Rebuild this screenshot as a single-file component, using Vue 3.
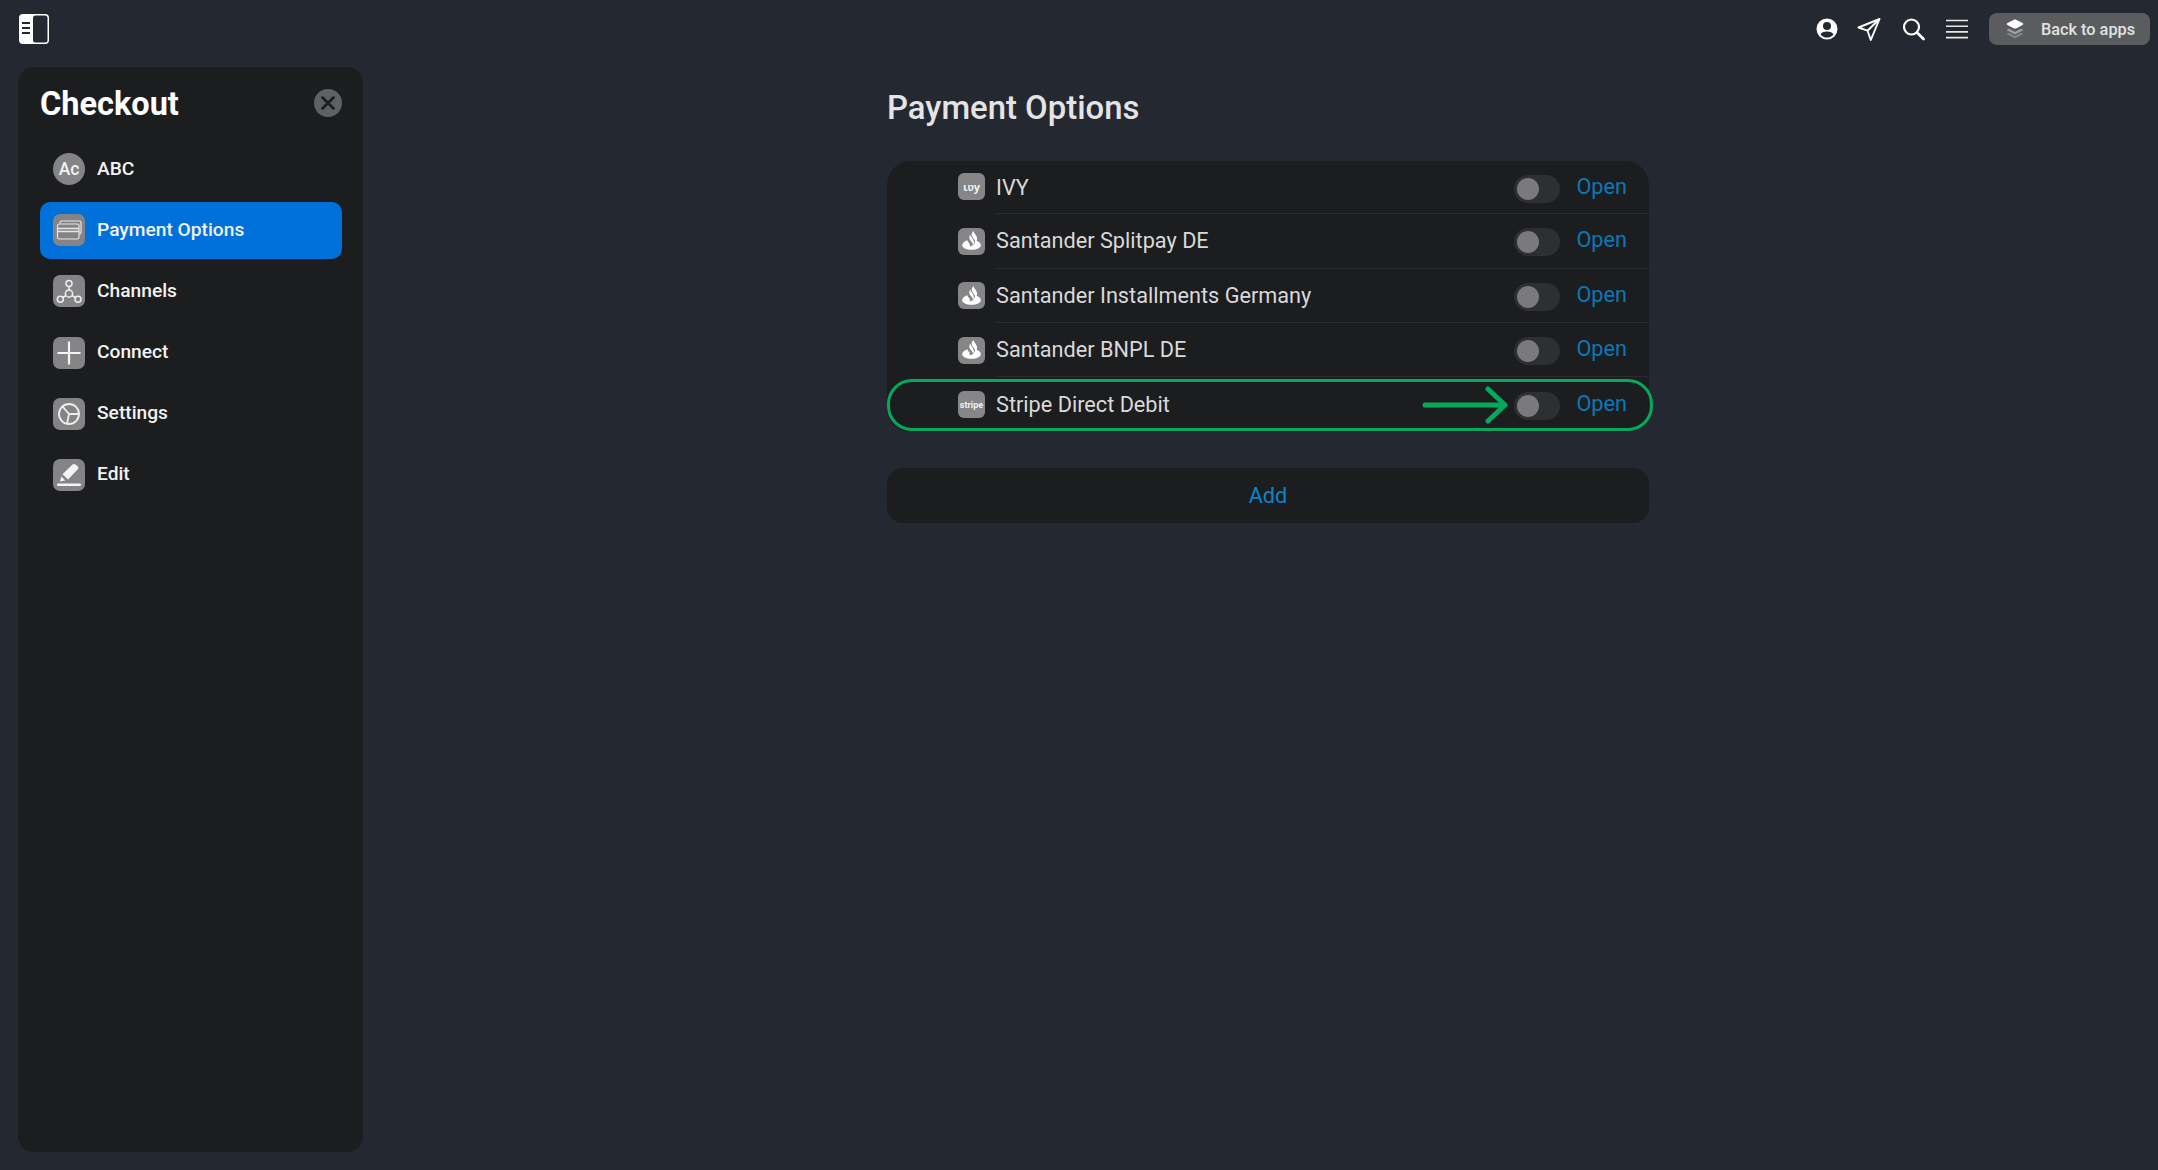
<template>
  <div class="page">
    <header class="topbar">
      <svg class="panel-toggle" viewBox="0 0 32 32" width="32" height="32">
        <rect x="1" y="1" width="30" height="30" rx="4" fill="#fff" />
        <rect x="15" y="2.500" width="14.500" height="27" rx="2.500" fill="#242831" />
        <path d="M4 10h8M4 15h8M4 20h8" stroke="#242831" stroke-width="2" fill="none" />
      </svg>
      <div class="top-actions">
        <svg class="top-icon user" viewBox="0 0 24 24" width="24" height="24">
          <path fill="#fff" fill-rule="evenodd" d="M12 1.500a10.500 10.500 0 1 0 0 21 10.500 10.500 0 0 0 0-21Zm0 3.500a4 4 0 1 1 0 8 4 4 0 0 1 0-8Zm0 15.500a8.300 8.300 0 0 1-6.500-3.100c.6-1.900 3.400-3 6.500-3s5.900 1.100 6.500 3A8.300 8.300 0 0 1 12 20.500Z" />
        </svg>
        <svg class="top-icon" viewBox="0 0 24 24" width="24" height="24">
          <path d="M22.500 2 1.500 10.500l9 3.200 3.300 9.300L22.500 2ZM10.500 13.700 22.500 2" fill="none" stroke="#fff" stroke-width="1.900" stroke-linejoin="round" />
        </svg>
        <svg class="top-icon" viewBox="0 0 24 24" width="24" height="24">
          <circle cx="10.500" cy="10" r="7.500" fill="none" stroke="#fff" stroke-width="2.200" />
          <path d="m16 15.500 6.500 6.500" stroke="#fff" stroke-width="2.600" stroke-linecap="round" />
        </svg>
        <svg class="top-icon" viewBox="0 0 24 24" width="24" height="24">
          <path d="M1 3.500h22M1 9.200h22M1 14.900h22M1 20.600h22" stroke="#e8e8e8" stroke-width="1.600" />
        </svg>
        <button class="back-btn">
          <svg viewBox="0 0 20 22" width="20" height="22">
            <path d="M1.500 16 10 20.500l8.500-4.500-2.400-1.300L10 18l-6.100-3.300Z" fill="#85868a" />
            <path d="M1.500 12 10 16.500l8.500-4.500-2.400-1.300L10 14 3.900 10.700Z" fill="#a0a1a4" />
            <path d="M10 1.500c-.5 0-1 .2-1.500.4L2.500 5c-1 .6-1 1.400 0 2l6 3.200c1 .5 2 .5 3 0l6-3.200c1-.6 1-1.400 0-2l-6-3.100c-.5-.2-1-.4-1.500-.4Z" fill="#fff" />
          </svg>
          <span>Back to apps</span>
        </button>
      </div>
    </header>

    <div class="body">
      <aside class="sidebar">
        <div class="side-head">
          <h2>Checkout</h2>
          <span class="close">
            <svg viewBox="0 0 28 28" width="28" height="28">
              <path d="m8.500 8.500 11 11m0-11-11 11" stroke="#1c1d1f" stroke-width="2.800" stroke-linecap="round" />
            </svg>
          </span>
        </div>
        <nav class="menu">
          <a v-for="item in menu" :key="item.name" class="menu-item" :class="{ active: item.name === 'Payment Options' }">
            <span class="menu-icon" :class="{ round: item.icon === 'ac' }">
              <template v-if="item.icon === 'ac'">Ac</template>
              <svg v-else-if="item.icon === 'card'" viewBox="0 0 32 32" width="32" height="32" fill="none" stroke="#e6e6e6" stroke-width="1.200">
                <path d="M7 9.500V8.500a1.500 1.500 0 0 1 1.500-1.500h18A1.500 1.500 0 0 1 28 8.500v10a1.500 1.500 0 0 1-1.500 1.500H26" />
                <rect x="4.500" y="10" width="21.500" height="15" rx="1.800" />
                <path d="M4.500 14.500H26M4.500 17.500H26" stroke-width="1.500" />
              </svg>
              <svg v-else-if="item.icon === 'channels'" viewBox="0 0 32 32" width="32" height="32" fill="none" stroke="#eee" stroke-width="1.500">
                <circle cx="16" cy="8.500" r="3" />
                <circle cx="7.300" cy="24.200" r="3" />
                <circle cx="25" cy="24.200" r="3" />
                <circle cx="16" cy="18.500" r="3.600" />
                <path d="M16 11.500V15M13 20.500l-3.200 2M19 20.500l3.400 2" />
              </svg>
              <svg v-else-if="item.icon === 'plus'" viewBox="0 0 32 32" width="32" height="32">
                <path d="M16 4.500v23M4.500 16h23" stroke="#f4f4f4" stroke-width="2.200" />
              </svg>
              <svg v-else-if="item.icon === 'settings'" viewBox="0 0 32 32" width="32" height="32" fill="none" stroke="#eee" stroke-width="1.800">
                <circle cx="16" cy="16" r="10" />
                <path d="M16 16 9.500 8.500M16 16h10M16 16l-2 10" />
              </svg>
              <svg v-else viewBox="0 0 32 32" width="32" height="32">
                <path d="M19.500 5.500c1-.8 2.100-.7 3 .1l2.300 2c.8.800.8 1.900 0 2.700L15 20.500l-5.500-5.300Z" fill="#f4f4f4" />
                <path d="m8.300 17.500 4 3.900-5.300 1.100Z" fill="#f4f4f4" />
                <rect x="4" y="24.500" width="24" height="2.600" rx="1" fill="#f4f4f4" />
              </svg>
            </span>
            <span class="menu-label">{{ item.name }}</span>
          </a>
        </nav>
      </aside>

      <main class="content">
        <h1>Payment Options</h1>
        <section class="list">
          <div v-for="(row, i) in payments" :key="row.name" class="row">
            <span class="pay-icon">
              <span v-if="row.logo === 'ivy'" class="logo-ivy">ιʋy</span>
              <span v-else-if="row.logo === 'stripe'" class="logo-stripe">stripe</span>
              <svg v-else viewBox="0 0 28 28" width="28" height="28">
                <path fill="#fff" d="M16 3.500c.5 2.500 3.800 4.800 3.800 8 0 1.600-.7 3-1.800 4 .3-2.700-3.300-4.900-3.800-7.500-.3-1.600.7-3.300 1.800-4.500Z" />
                <path fill="#fff" d="M12.800 7.500c.3 2.500 3.500 4.300 3.700 7.300.1 1.300-.3 2.300-1 3.200.2-2.500-2.900-4-3.600-6.600-.3-1.400 0-2.800.9-3.900Z" />
                <path fill="#fff" d="M10.300 13C6.600 14.300 4.300 16.200 4.300 18.300c0 2.700 4.300 4.700 9.700 4.700s9.700-2 9.700-4.700c0-2.200-2.500-4.100-6-5.300.1 2.200-.8 4-2.500 5.300-1 .7-2 1.200-3 1.500.5-2-.2-3.200-1.200-4.300-.8-.9-1.600-1.600-1.700-2.500Z" />
              </svg>
            </span>
            <div class="row-main" :class="{ last: i === payments.length - 1 }">
              <span class="row-name">{{ row.name }}</span>
              <span class="switch"><span class="knob"></span></span>
              <a class="open">Open</a>
            </div>
            <template v-if="i === payments.length - 1">
              <span class="highlight"></span>
              <svg class="arrow" viewBox="0 0 86 38" width="86" height="38">
                <path d="M3 19h80M66 3l17 16-17 16" fill="none" stroke="#06a95c" stroke-width="5" stroke-linecap="round" stroke-linejoin="round" />
              </svg>
            </template>
          </div>
        </section>
        <button class="add">Add</button>
      </main>
    </div>
  </div>
</template>

<script setup>
const menu = [
  { name: 'ABC', icon: 'ac' },
  { name: 'Payment Options', icon: 'card' },
  { name: 'Channels', icon: 'channels' },
  { name: 'Connect', icon: 'plus' },
  { name: 'Settings', icon: 'settings' },
  { name: 'Edit', icon: 'edit' }
]

const payments = [
  { name: 'IVY', logo: 'ivy' },
  { name: 'Santander Splitpay DE', logo: 'santander' },
  { name: 'Santander Installments Germany', logo: 'santander' },
  { name: 'Santander BNPL DE', logo: 'santander' },
  { name: 'Stripe Direct Debit', logo: 'stripe' }
]
</script>

<style>
html,
body {
  background: #242831;
}
</style>

<style scoped>
.page {
  width: 2158px;
  height: 1170px;
  overflow: hidden;
  background: #242831;
  color: #fff;
  font-family: Roboto, "Liberation Sans", sans-serif;
}

.topbar {
  display: flex;
  align-items: center;
  justify-content: space-between;
  height: 58px;
  padding: 0 8px 0 18px;
  box-sizing: border-box;
}

.panel-toggle {
  display: block;
}

.top-actions {
  display: flex;
  align-items: center;
}

.top-icon {
  margin-right: 20px;
  display: block;
}

.top-icon.user {
  margin-right: 18px;
}

.back-btn {
  display: flex;
  align-items: center;
  width: 161px;
  height: 32px;
  padding: 0 0 0 16px;
  border: 0;
  border-radius: 8px;
  background: #5b5c5e;
  color: #e2e2e2;
  font: 500 16.300px Roboto, sans-serif;
}

.back-btn svg {
  margin-right: 16px;
  flex: none;
}

.body {
  display: flex;
  align-items: flex-start;
  padding: 9px 0 0 18px;
}

.sidebar {
  width: 345px;
  height: 1085px;
  flex: none;
  padding: 0 21px 0 22px;
  box-sizing: border-box;
  border-radius: 16px;
  background: #1c1d1f;
}

.side-head {
  display: flex;
  align-items: center;
  justify-content: space-between;
  height: 73.500px;
}

.side-head h2 {
  margin: 0;
  font-size: 32.500px;
  font-weight: 700;
  line-height: 72px;
}

.close {
  display: block;
  width: 28px;
  height: 28px;
  margin-bottom: 2px;
  border-radius: 50%;
  background: #5f6062;
}

.close svg {
  display: block;
}

.menu {
  display: flex;
  flex-direction: column;
  gap: 4.200px;
}

.menu-item {
  display: flex;
  align-items: center;
  gap: 12px;
  height: 57px;
  padding-left: 13px;
  border-radius: 10px;
  font-size: 19.200px;
  font-weight: 500;
  color: #f2f2f2;
}

.menu-item.active {
  background: #0070db;
}

.menu-label {
  padding-bottom: 2px;
}

.menu-icon {
  display: flex;
  align-items: center;
  justify-content: center;
  width: 32px;
  height: 32px;
  flex: none;
  border-radius: 7px;
  background: #848486;
  font-size: 17.500px;
}

.menu-icon.round {
  border-radius: 50%;
}

.menu-icon svg {
  display: block;
}

.content {
  width: 766px;
  margin-left: 524px;
}

.content h1 {
  margin: 0;
  height: 94px;
  font-size: 32.900px;
  font-weight: 500;
  line-height: 82px;
  color: #e4e4e4;
}

.list {
  width: 762px;
  border-radius: 24px;
  background: #1c1d1f;
}

.row {
  position: relative;
  display: flex;
  align-items: center;
  height: 54.400px;
  padding-left: 71px;
}

.row:first-child {
  height: 53.300px;
}

.row:first-child .pay-icon {
  margin-bottom: 2px;
}

.pay-icon {
  display: flex;
  align-items: center;
  justify-content: center;
  width: 27px;
  height: 27px;
  margin-right: 11px;
  flex: none;
  border-radius: 6px;
  background: #868688;
  overflow: hidden;
}

.logo-ivy {
  font: 700 11px "Open Sans", sans-serif;
  color: #f0f0f0;
}

.logo-stripe {
  font: 700 9px Roboto, sans-serif;
  color: #f0f0f0;
}

.row-main {
  display: flex;
  align-items: center;
  flex: 1;
  height: 100%;
  padding-right: 22px;
  box-sizing: border-box;
  border-bottom: 1px solid #2c2d2f;
}

.row-main.last {
  border-bottom: 0;
}

.row-name {
  flex: 1;
  font-size: 21.700px;
  color: #d9d9d9;
}

.switch {
  display: block;
  width: 46px;
  height: 28px;
  margin-top: 3px;
  margin-right: 16px;
  padding: 3px;
  box-sizing: border-box;
  border-radius: 14px;
  background: #2e2f31;
}

.knob {
  display: block;
  width: 22px;
  height: 22px;
  border-radius: 50%;
  background: #7a7a7c;
}

.open {
  position: relative;
  top: -1px;
  font-size: 21.700px;
  color: #0a78b8;
}

.highlight {
  position: absolute;
  left: 0;
  right: -4px;
  top: 2px;
  height: 52px;
  box-sizing: border-box;
  border: 3px solid #06a95c;
  border-radius: 25px;
  pointer-events: none;
}

.arrow {
  position: absolute;
  left: 535px;
  top: 9px;
}

.add {
  display: block;
  width: 762px;
  height: 55px;
  margin-top: 36.300px;
  border: 0;
  border-radius: 16px;
  background: #1c1d1f;
  color: #0a85cc;
  font: 400 21.700px Roboto, sans-serif;
}
</style>
